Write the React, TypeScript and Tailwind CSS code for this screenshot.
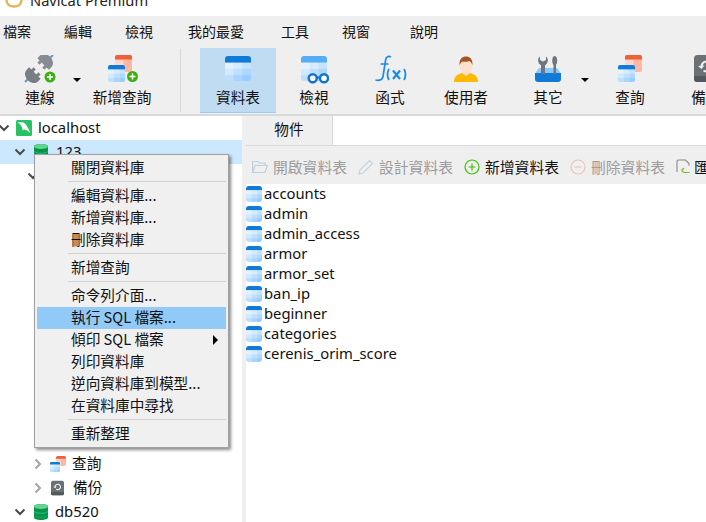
import React from "react";

const cjk = "font-['Noto_Sans_CJK_TC','Noto_Sans',sans-serif]";
const latin = "font-['Noto_Sans','Noto_Sans_CJK_TC',sans-serif]";

function TableGrid({ x, y, w, h, head = "#0f7ad8", rx }: { x: number; y: number; w: number; h: number; head?: string; rx?: number }) {
  const hh = h * 0.27;
  const cw = w / 3;
  const ch = (h - hh) / 3;
  const colors = [
    ["#e3f2ff", "#d6ebff", "#c4e3ff"],
    ["#d3e9ff", "#bfdfff", "#acd7ff"],
    ["#bcdeff", "#a8d5ff", "#98cdff"],
  ];
  const id = `c${x}${y}${w}`;
  return (
    <g>
      <clipPath id={id}>
        <rect x={x} y={y} width={w} height={h} rx={rx ?? w * 0.12} />
      </clipPath>
      <g clipPath={`url(#${id})`}>
        <rect x={x} y={y} width={w} height={hh} fill={head} />
        {colors.map((r, i) =>
          r.map((c, j) => <rect key={`${i}${j}`} x={x + j * cw} y={y + hh + i * ch} width={cw + 0.1} height={ch + 0.1} fill={c} />)
        )}
      </g>
    </g>
  );
}

function RedGrid({ x, y, w, h }: { x: number; y: number; w: number; h: number }) {
  const hh = h * 0.27;
  return (
    <g>
      <rect x={x} y={y} width={w} height={h} rx={2} fill="#ffb7a3" />
      <rect x={x} y={y + hh} width={w * 0.5} height={h - hh} fill="#ffd6ca" />
      <path d={`M${x} ${y + 2}a2 2 0 0 1 2-2h${w - 4}a2 2 0 0 1 2 2v${hh - 2}h-${w}z`} fill="#ee6038" />
    </g>
  );
}

function GreenPlus({ cx, cy, r = 5.5 }: { cx: number; cy: number; r?: number }) {
  return (
    <g>
      <circle cx={cx} cy={cy} r={r} fill="#3fae14" />
      <path d={`M${cx - 3} ${cy}h6M${cx} ${cy - 3}v6`} stroke="#fff" strokeWidth={1.5} />
    </g>
  );
}

function IconPlug() {
  return (
    <svg width="34" height="30" viewBox="0 0 34 30">
      <path d="M2 27l5-5M25 5l5-5" stroke="#5f9bd0" strokeWidth="2" />
      <g transform="translate(21 8) rotate(-45) scale(1.250)">
        <path d="M-1 -6.500h3a5 6.500 0 0 1 0 13h-3z" fill="#868c92" />
        <path d="M-3.500 -4h3v2.500h-3zM-3.500 1.500h3v2.500h-3z" fill="#868c92" />
      </g>
      <g transform="translate(11 19) rotate(-45) scale(1.250)">
        <path d="M1 -6.500h-3a5 6.500 0 0 0 0 13h3z" fill="#787e84" />
        <path d="M.5 -4h3v2.500h-3zM.5 1.500h3v2.500h-3z" fill="#787e84" />
      </g>
      <GreenPlus cx={27} cy={22} r={5.500} />
    </svg>
  );
}

function IconNewQuery() {
  return (
    <svg width="34" height="30" viewBox="0 0 34 30">
      <RedGrid x={10} y={0} w={17} h={17} />
      <TableGrid x={3} y={10} w={17} h={17} />
      <GreenPlus cx={27.5} cy={21.5} r={5.500} />
    </svg>
  );
}

function IconTable() {
  return (
    <svg width="28" height="27" viewBox="0 0 28 27">
      <TableGrid x={1} y={1} w={26} h={25} rx={3} />
    </svg>
  );
}

function IconView() {
  return (
    <svg width="30" height="29" viewBox="0 0 30 29">
      <TableGrid x={2} y={1} w={26} h={25} head="#55aef3" rx={3} />
      <circle cx={13.7} cy={23.3} r={4} fill="#fff" stroke="#0f75cc" strokeWidth={2.400} />
      <circle cx={25} cy={23.3} r={4} fill="#fff" stroke="#0f75cc" strokeWidth={2.400} />
      <path d="M17.500 22.500h4" stroke="#0f75cc" strokeWidth={2} />
    </svg>
  );
}

function IconFx() {
  return (
    <svg width="34" height="28" viewBox="0 0 34 28" fill="none" stroke="#1a8be8">
      <path d="M18 2c-2.500-1.200-4.800-.3-5.300 2.500L10 21.500c-.5 3-3 4.500-7.500 3.500" strokeWidth="1.700" />
      <path d="M7.500 9h8" strokeWidth="1.500" />
      <path d="M16 14c-2 3-2 8 0 11M31 14c2 3 2 8 0 11" strokeWidth="1.800" />
      <path d="M20 15.500l7 8.500M27 15.500l-7 8.500" strokeWidth="2.200" />
    </svg>
  );
}

function IconUser() {
  return (
    <svg width="24" height="27" viewBox="0 0 24 27">
      <path d="M0 27c0-6 4-8 8-9l4 2 4-2c4 1 8 3 8 9z" fill="#fdb900" />
      <path d="M8 14h8v4l-4 3-4-3z" fill="#fbdcc4" />
      <ellipse cx="12" cy="10.500" rx="6.500" ry="8" fill="#fde0cb" />
      <path d="M5.500 10c-.5-6 3-8.500 6.500-8.500S19 4 18.500 10c-1-2.500-2-3.500-3.500-4-2 1-5 1-6 .5-1.500.5-2.500 1.500-3.500 3.500z" fill="#a6541f" />
    </svg>
  );
}

function IconOther() {
  return (
    <svg width="28" height="27" viewBox="0 0 28 27">
      <path d="M4 14a2.500 2.500 0 0 1 2-1h16a2.500 2.500 0 0 1 2 1l3 5H1z" fill="#8cc8fb" />
      <path d="M1 18h26v6a3 3 0 0 1-3 3H4a3 3 0 0 1-3-3z" fill="#0f7ad8" />
      <path d="M7 8h4v11H7z" fill="#6d767e" />
      <path d="M6 1.500V5l3 1.500L12 5V1.500C14.500 3 14.500 8 11.500 10h-5C3.500 8 3.500 3 6 1.500z" fill="#6d767e" />
      <path d="M19.500 9h2.500v10h-2.500z" fill="#6d767e" />
      <path d="M20.700 1c2 0 2.500 3 2.500 5s-1 4.500-2.500 4.500S18.200 8 18.200 6s.5-5 2.500-5z" fill="#6d767e" />
    </svg>
  );
}

function IconQuery() {
  return (
    <svg width="26" height="28" viewBox="0 0 26 28">
      <RedGrid x={8} y={0} w={17} h={17} />
      <TableGrid x={1} y={10} w={17} h={17} />
    </svg>
  );
}

function IconBackup({ w = 24, h = 27 }: { w?: number; h?: number }) {
  return (
    <svg width={w} height={h} viewBox="0 0 24 27">
      <rect x="0" y="0" width="24" height="27" rx="3.500" fill="#6b7075" />
      <path d="M0 21h24v2.500a3.500 3.500 0 0 1-3.500 3.500h-17A3.500 3.500 0 0 1 0 23.500z" fill="#54585c" />
      <path d="M7.500 11.500a5 5 0 1 1 2 4" fill="none" stroke="#f2f2f2" strokeWidth="2" />
      <path d="M4 11l3.500 3 3-3.500z" fill="#f2f2f2" />
    </svg>
  );
}

function IconDb({ w = 14 }: { w?: number }) {
  return (
    <svg width={w} height="16" viewBox="0 0 14 16">
      <path d="M0 2.500C0 1 3 0 7 0s7 1 7 2.500v11C14 15 11 16 7 16s-7-1-7-2.500z" fill="#08924b" />
      <ellipse cx="7" cy="2.500" rx="7" ry="2.500" fill="#5fd590" />
      <path d="M0 6.500C1 8 4 8.500 7 8.500s6-.5 7-2v1.500c-1 1.500-4 2-7 2s-6-.5-7-2z" fill="#1ab564" />
      <path d="M0 10.500c1 1.500 4 2 7 2s6-.5 7-2V12c-1 1.500-4 2-7 2s-6-.5-7-2z" fill="#0ba557" />
    </svg>
  );
}

function IconServer() {
  return (
    <svg width="16" height="16" viewBox="0 0 16 16">
      <rect width="16" height="16" rx="1.500" fill="#27c261" />
      <path d="M1.500 2.500c3-1.200 6.500-.5 8 1.500 2 2.500 3 5 5 9-2-1.500-3-2.500-4.500-3C8.500 9 7.500 9.500 7 10.500 6 8.500 6 7 5 5.500 4 4 3 3.500 1.500 2.500z" fill="#fff" />
    </svg>
  );
}

function SmallTable() {
  return (
    <svg width="16" height="16" viewBox="0 0 16 16" className="shrink-0">
      <TableGrid x={0} y={0} w={16} h={16} rx={3} />
    </svg>
  );
}

function Chevron({ open, gray }: { open?: boolean; gray?: boolean }) {
  const color = gray ? "#a3a3a3" : "#4a4a4a";
  return (
    <svg width="12" height="12" viewBox="0 0 12 12" fill="none" stroke={color} strokeWidth="2" className="shrink-0">
      {open ? <path d="M1.500 3.500L6 8l4.500-4.500" /> : <path d="M3.500 1.500L8 6l-4.500 4.500" />}
    </svg>
  );
}

function Caret() {
  return <div className="mt-[30px] h-0 w-0 border-x-[4px] border-t-[4px] border-x-transparent border-t-black" />;
}

function ToolItem({ label, icon, active, w = "w-[76px]" }: { label: string; icon: React.ReactNode; active?: boolean; w?: string }) {
  return (
    <div className={`${w} h-[65px] shrink-0 flex flex-col items-center ${active ? "bg-[#c0dcf3] border-b border-[#99ccf5]" : ""}`}>
      <div className="h-[29px] mt-[7px] flex items-start justify-center">{icon}</div>
      <div className="mt-[2px] text-[14.67px] leading-[22px] whitespace-nowrap text-[#111]">{label}</div>
    </div>
  );
}

function MenuItem({ label, active, arrow }: { label: string; active?: boolean; arrow?: boolean }) {
  return (
    <div className={`h-[22px] flex items-center pl-[34px] pr-[8px] text-[14.67px] leading-[20px] whitespace-nowrap text-[#111] ${active ? "bg-[#91c9f7]" : ""}`}>
      <span className="flex-1 pb-[2px]">{label}</span>
      {arrow && <div className="h-0 w-0 border-y-[5px] border-l-[5px] border-y-transparent border-l-black" />}
    </div>
  );
}

function Sep() {
  return <div className="h-[6px] pt-[2px] pl-[31px]"><div className="h-px w-full bg-[#d2d2d2]" /></div>;
}

function ContextMenu() {
  return (
    <div className={`absolute left-[34px] top-[154px] w-[195px] bg-[#f0f0f0] border border-[#a0a0a0] px-[2px] py-[2px] shadow-[2px_2px_3px_rgba(0,0,0,0.45)] ${cjk}`}>
      <MenuItem label="關閉資料庫" />
      <Sep />
      <MenuItem label="編輯資料庫..." />
      <MenuItem label="新增資料庫..." />
      <MenuItem label="刪除資料庫" />
      <Sep />
      <MenuItem label="新增查詢" />
      <Sep />
      <MenuItem label="命令列介面..." />
      <MenuItem label="執行 SQL 檔案..." active />
      <MenuItem label="傾印 SQL 檔案" arrow />
      <MenuItem label="列印資料庫" />
      <MenuItem label="逆向資料庫到模型..." />
      <MenuItem label="在資料庫中尋找" />
      <Sep />
      <MenuItem label="重新整理" />
    </div>
  );
}

function TreeRow({ indent, children, active }: { indent: string; children?: React.ReactNode; active?: boolean }) {
  return (
    <div className={`h-[24px] flex items-center ${indent} text-[14.67px] whitespace-nowrap text-[#111] ${active ? "bg-[#cce8ff]" : ""}`}>
      {children}
    </div>
  );
}

const menus: [string, string][] = [
  ["檔案", "ml-[3px]"],
  ["編輯", "ml-[33px]"],
  ["檢視", "ml-[33px]"],
  ["我的最愛", "ml-[35px]"],
  ["工具", "ml-[37px]"],
  ["視窗", "ml-[33px]"],
  ["說明", "ml-[40px]"],
];

const tables = ["accounts", "admin", "admin_access", "armor", "armor_set", "ban_ip", "beginner", "categories", "cerenis_orim_score"];

export default function App() {
  return (
    <div className={`relative w-[706px] h-[522px] overflow-hidden bg-white ${cjk}`}>
      {/* title bar */}
      <div className="h-[16px] overflow-hidden bg-white flex items-end">
        <svg width="18" height="8" viewBox="0 0 18 8" className="ml-[5px] mb-[8px] shrink-0">
          <path d="M1.500 0c0 4 3 6.500 7.500 6.500S16.500 4 16.500 0" fill="none" stroke="#e4b65a" strokeWidth="2.500" />
        </svg>
        <div className={`ml-[7px] mb-[9px] text-[14.67px] leading-[14px] h-[7px] flex items-end text-[#222] ${latin}`}>
          <span className="whitespace-nowrap">Navicat Premium</span>
        </div>
      </div>

      {/* menu */}
      <div className="h-[32px] pb-[2px] bg-[#efefef] flex items-center text-[14px] text-[#111]">
        {menus.map(([m, c]) => (
          <span key={m} className={`${c} whitespace-nowrap`}>{m}</span>
        ))}
      </div>

      {/* toolbar */}
      <div className="h-[66px] bg-[#efefef] flex overflow-hidden">
        <ToolItem label="連線" icon={<IconPlug />} w="w-[56px] ml-[12px]" />
        <div className="w-[9px] ml-[5px] shrink-0"><Caret /></div>
        <ToolItem label="新增查詢" icon={<IconNewQuery />} w="w-[68px] ml-[6px]" />
        <div className="ml-[24px] w-px h-[63px] mt-px bg-[#d6d6d6] shrink-0" />
        <div className="w-[19px] shrink-0" />
        <ToolItem label="資料表" icon={<IconTable />} active />
        <ToolItem label="檢視" icon={<IconView />} />
        <ToolItem label="函式" icon={<IconFx />} />
        <ToolItem label="使用者" icon={<IconUser />} />
        <div className="w-[6px] shrink-0" />
        <ToolItem label="其它" icon={<IconOther />} />
        <div className="w-[6px] shrink-0 -ml-[5px] mr-[5px]"><Caret /></div>
        <ToolItem label="查詢" icon={<IconQuery />} />
        <ToolItem label="備份" icon={<IconBackup />} />
      </div>
      <div className="h-[2px] bg-[#d9d9d9]" />

      {/* body */}
      <div className="flex h-[406px]">
        <div className="w-[242px] shrink-0 bg-white overflow-hidden">
          <TreeRow indent="pl-0">
            <div className="-ml-[2px]"><Chevron open /></div>
            <div className="ml-[6px]"><IconServer /></div>
            <span className={`ml-[6px] pb-[2px] text-[14.8px] ${latin}`}>localhost</span>
          </TreeRow>
          <TreeRow indent="pl-[14px]" active>
            <Chevron open />
            <div className="ml-[8px]"><IconDb /></div>
            <span className={`ml-[8px] pb-[2px] text-[14.8px] ${latin}`}>123</span>
          </TreeRow>
          <TreeRow indent="pl-[27px]"><Chevron open /></TreeRow>
          {Array.from({ length: 11 }).map((_, i) => (
            <TreeRow key={i} indent="pl-0" />
          ))}
          <TreeRow indent="pl-[32px]">
            <Chevron gray />
            <div className="ml-[6px] flex">
              <svg width="16" height="16" viewBox="0 0 16 16">
                <RedGrid x={6} y={0} w={10} h={10} />
                <TableGrid x={0} y={6} w={10} h={10} />
              </svg>
            </div>
            <span className="ml-[6px] pb-[2px]">查詢</span>
          </TreeRow>
          <TreeRow indent="pl-[32px]">
            <Chevron gray />
            <div className="ml-[7px] flex"><IconBackup w={13} h={16} /></div>
            <span className="ml-[9px] pb-[2px]">備份</span>
          </TreeRow>
          <TreeRow indent="pl-[14px]">
            <Chevron open />
            <div className="ml-[8px]"><IconDb /></div>
            <span className={`ml-[7px] pb-[2px] text-[14.8px] ${latin}`}>db520</span>
          </TreeRow>
        </div>
        <div className="w-[4px] shrink-0 bg-[#efefef]" />

        <div className="flex-1 min-w-0 flex flex-col">
          <div className="h-[30px] flex border-b border-[#d9d9d9] bg-white shrink-0">
            <div className="w-[87px] pb-[3px] bg-[#efefef] border-r border-[#d9d9d9] flex items-center justify-center text-[14.67px] text-[#111]">物件</div>
          </div>
          <div className="h-[38px] pt-[4px] bg-[#efefef] shrink-0 flex items-center pl-[6px] text-[14.8px] whitespace-nowrap overflow-hidden">
            <svg width="16" height="14" viewBox="0 0 16 14" fill="none" stroke="#bcd0e0" strokeWidth="1.200" className="shrink-0">
              <path d="M.6 12.500V1.500h5l1.500 1.500h6v2.500M.6 12.500l2.500-7H15.400l-2.500 7z" />
            </svg>
            <span className="ml-[5px] text-[#9b9b9b]">開啟資料表</span>
            <svg width="16" height="16" viewBox="0 0 16 16" fill="none" stroke="#c4d2de" strokeWidth="1.200" className="ml-[11px] shrink-0">
              <path d="M1 15l1-4L11.500 1.500l3 3L5 14z" />
            </svg>
            <span className="ml-[5px] text-[#9b9b9b]">設計資料表</span>
            <svg width="16" height="16" viewBox="0 0 16 16" fill="none" stroke="#3cc000" strokeWidth="1.200" className="ml-[11px] shrink-0">
              <circle cx="8" cy="8" r="7" />
              <path d="M8 4.500v7M4.500 8h7" />
            </svg>
            <span className="ml-[5px] text-[#111]">新增資料表</span>
            <svg width="16" height="16" viewBox="0 0 16 16" fill="none" stroke="#e8c4bf" strokeWidth="1.200" className="ml-[11px] shrink-0">
              <circle cx="8" cy="8" r="7" />
              <path d="M4.500 8h7" />
            </svg>
            <span className="ml-[5px] text-[#9b9b9b]">刪除資料表</span>
            <svg width="15" height="16" viewBox="0 0 15 16" fill="none" className="ml-[11px] shrink-0">
              <path d="M1 13V2.500A1.500 1.500 0 0 1 2.500 1h7L13 4.500v2" stroke="#8a8a8a" strokeWidth="1.100" />
              <path d="M13.500 13.500H8l-2.500-2M5.500 11.500L8 9" stroke="#6cc030" strokeWidth="1.200" />
            </svg>
            <span className="ml-[3px] text-[#111]">匯入</span>
          </div>
          <div className={`flex-1 bg-white ${latin}`}>
            {tables.map((t) => (
              <div key={t} className="h-[20px] flex items-center text-[14.8px] text-[#111]">
                <SmallTable />
                <span className="ml-[2px] pb-[2px]">{t}</span>
              </div>
            ))}
          </div>
        </div>
      </div>

      <ContextMenu />
    </div>
  );
}
